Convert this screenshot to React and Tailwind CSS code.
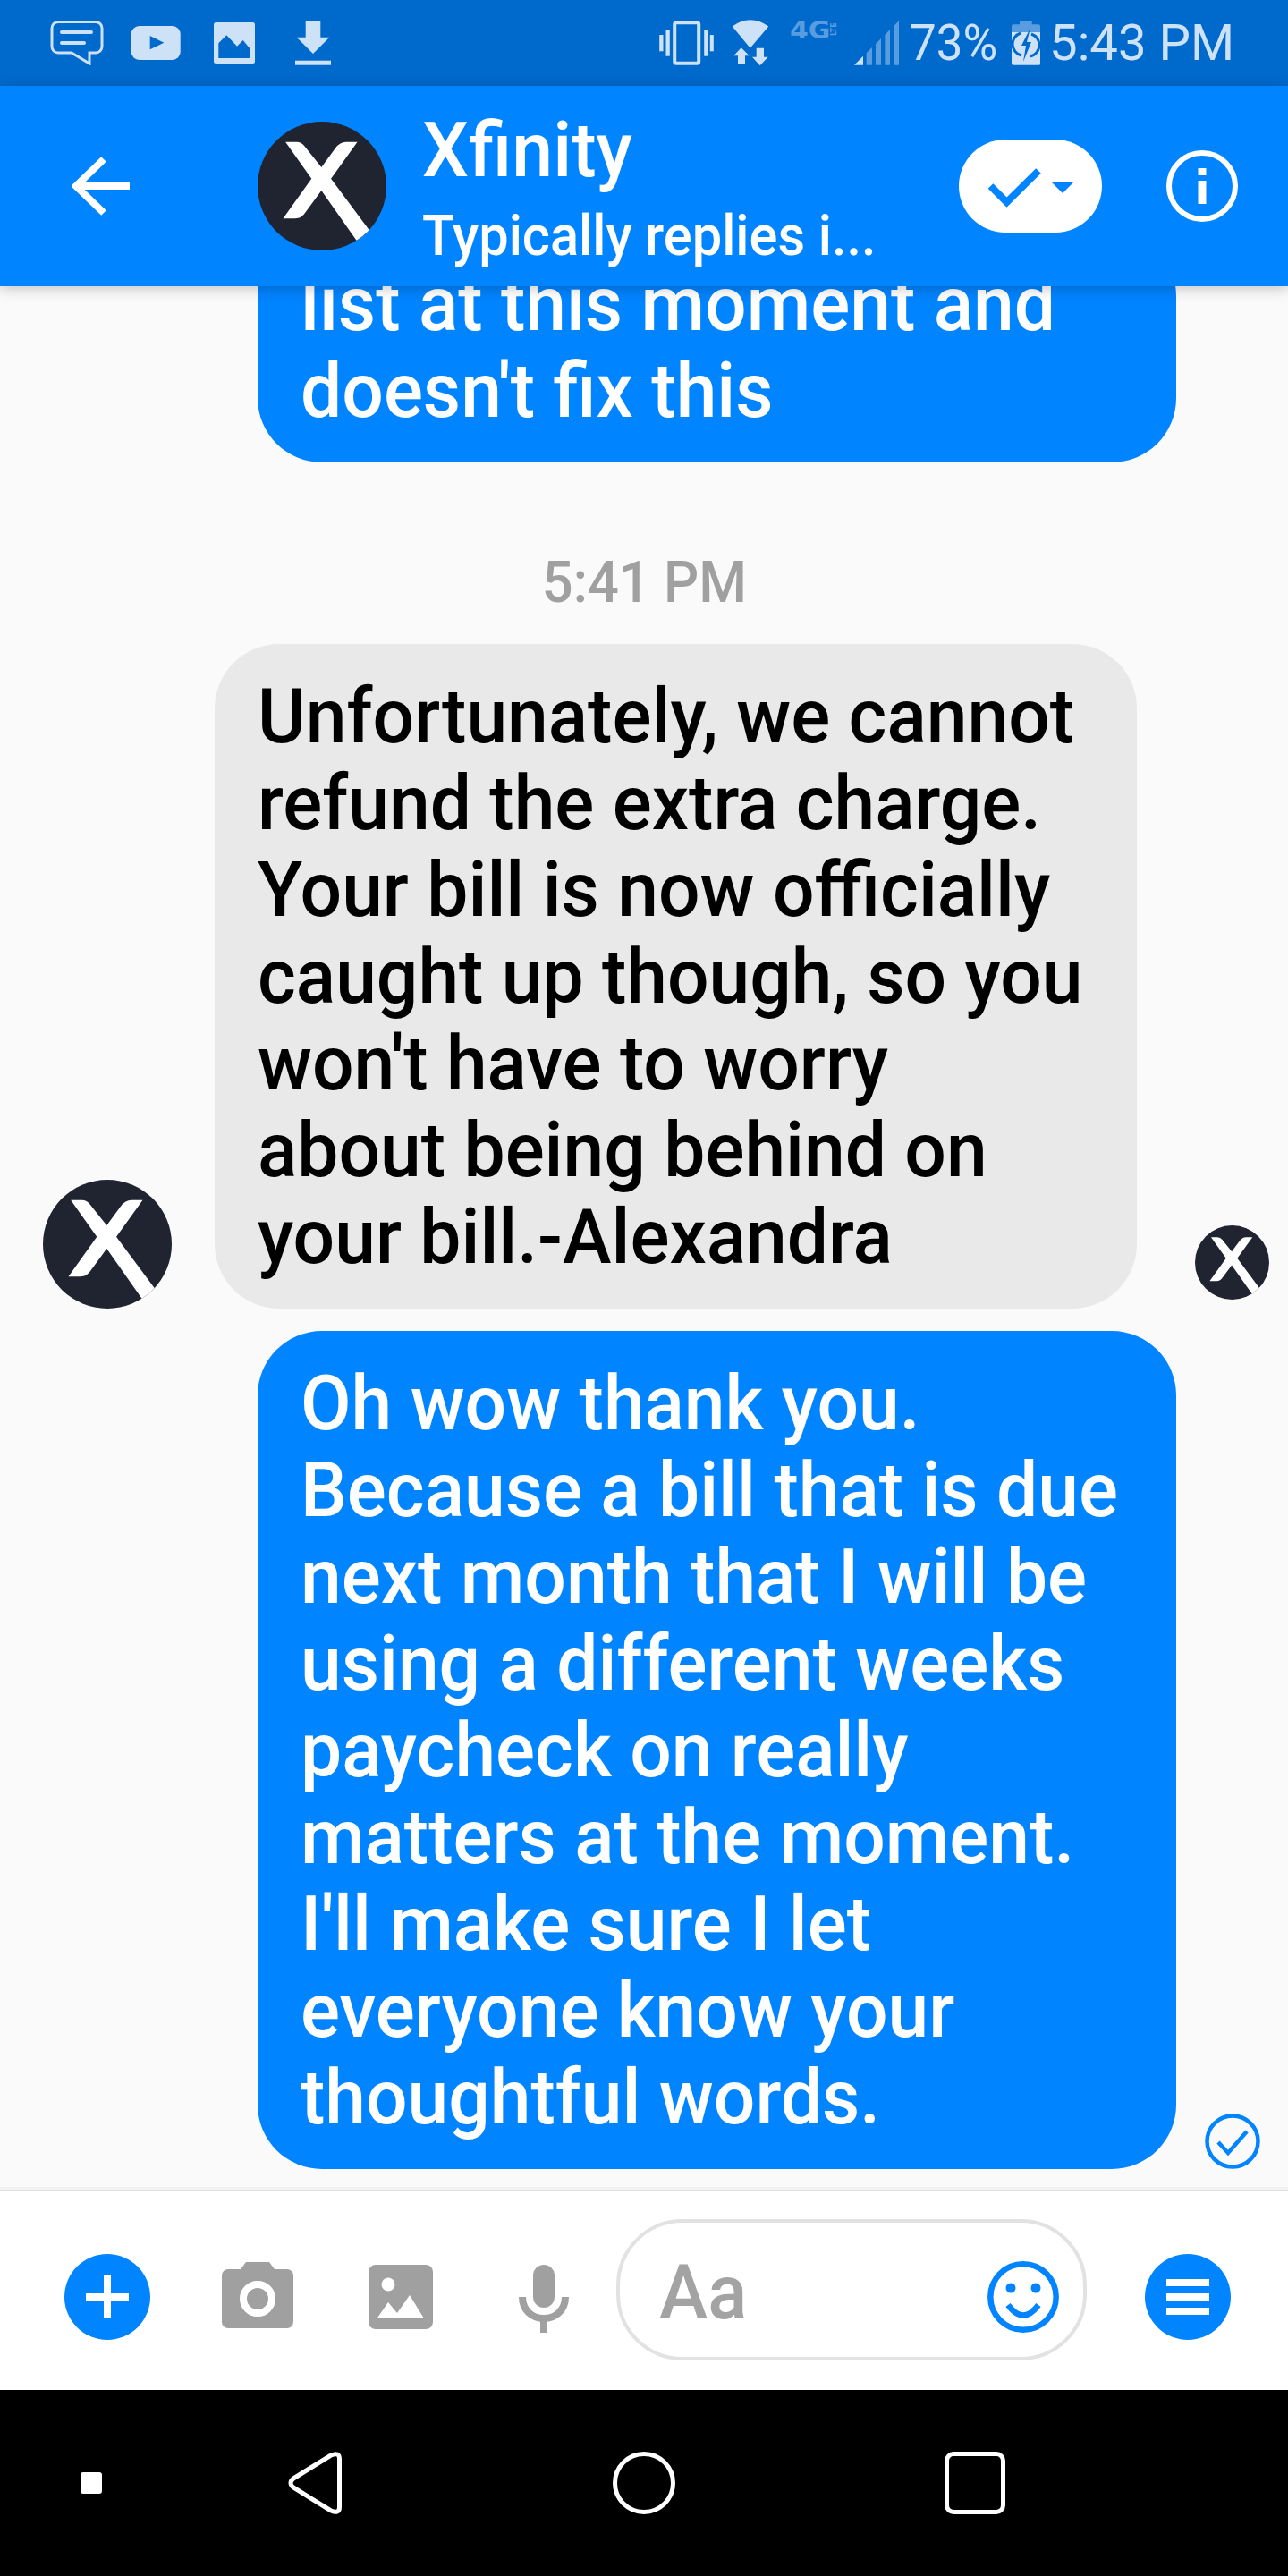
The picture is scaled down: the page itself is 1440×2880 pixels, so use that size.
import React from "react";

const XLogo = ({ className }) => (
  <svg viewBox="145 120 430 430" className={className}>
    <defs>
      <clipPath id="c"><circle cx="360" cy="335" r="215" /></clipPath>
    </defs>
    <circle cx="360" cy="335" r="215" fill="#1f2430" />
    <path clipPath="url(#c)" fill="#fff" d="M238 188H275Q292 188 302 202L358 272L405 208Q420 188 440 188H478L390 310L540 512L495 545L358 350L305 422Q292 443 270 443H230L325 310Z" />
  </svg>
);

const Bubble = ({ lines, className }) => (
  <div className={"shrink-0 rounded-[72px] text-[86px] leading-[97px] font-medium " + className}>
    {lines.map((l) => (
      <span key={l} className="block whitespace-nowrap origin-left scale-x-[.955]">{l}</span>
    ))}
  </div>
);

const StatusBar = () => (
  <div className="relative h-[96px] shrink-0 bg-[#0069cc] flex items-center text-[#cde1f7]">
    <svg width="60" height="50" viewBox="56 23 60 50" className="ml-[56px]" fill="none" stroke="#cde1f7" strokeWidth="3">
      <path d="M65 24.5H107a7 7 0 0 1 7 7V52a7 7 0 0 1-7 7H100V71L80 59H65a7 7 0 0 1-7-7V31.5a7 7 0 0 1 7-7Z" />
      <path strokeWidth="4" strokeLinecap="round" d="M69 36H102M69 48H94" />
    </svg>
    <svg width="56" height="40" viewBox="146 28 56 40" className="ml-[30px]">
      <rect x="146.7" y="29" width="55" height="38" rx="9" fill="#cde1f7" />
      <path d="M167.7 40L183.3 47.7L167.7 55.3Z" fill="#0069cc" />
    </svg>
    <svg width="46" height="46" viewBox="239 25 46 46" className="ml-[37px]">
      <rect x="239" y="25" width="46" height="46" rx="2.5" fill="#cde1f7" />
      <path d="M244.3 48.3L253.3 39.3L265 51.7L271.7 45L280 55V65H244.3Z" fill="#0069cc" />
    </svg>
    <svg width="40" height="50" viewBox="330 23 40 50" className="ml-[45px]" fill="#cde1f7">
      <path d="M341.7 23.3H358.3V41.7H368.3L350 60L331.7 41.7H341.7Z" />
      <rect x="330" y="67.7" width="40" height="5" />
    </svg>

    <svg width="61" height="50" viewBox="736.5 23 61 50" className="ml-[367px]" fill="#cde1f7">
      <rect x="753.7" y="25.3" width="27" height="45.4" rx="2" fill="none" stroke="#cde1f7" strokeWidth="4" />
      <rect x="744" y="33.3" width="4.3" height="29.4" />
      <rect x="786.7" y="33.3" width="4" height="29.4" />
      <rect x="736.7" y="39" width="4.3" height="18.3" />
      <rect x="793.3" y="39" width="4" height="18.3" />
    </svg>
    <svg width="42" height="52" viewBox="817 21.5 42 52" className="ml-[20px]" fill="#cde1f7">
      <path d="M817.7 29Q837.7 14.5 858.3 29L837.7 53.3Z" />
      <path d="M819.3 61.7L827.7 52.7L836.7 61.7H832V71H824V61.7Z" />
      <path d="M844.7 53.3H853V63.3H857.7L848.7 72.7L840 63.3H844.7Z" />
    </svg>
    <div className="ml-[23px] w-[54px] h-[50px] flex items-start text-[#5a9ce0] font-bold">
      <span className="w-[46px] text-[26px] leading-[22px] origin-left scale-x-[1.15] font-['DejaVu_Sans',sans-serif]">4G</span>
      <span className="text-[8px] leading-[8px] h-[20px] text-center [writing-mode:vertical-rl] rotate-180 font-['DejaVu_Sans',sans-serif]">LTE</span>
    </div>
    <svg width="50" height="50" viewBox="954 23 50 50" className="ml-[18px]">
      <path d="M954 72.7L964 62.7V72.7Z" fill="#cde1f7" />
      <path d="M967.7 59L974 53V72.7H967.7ZM978 49L984 43V72.7H978ZM988.3 39L994 33V72.7H988.3ZM998.3 29L1004 23.3V72.7H998.3Z" fill="#5a9ce0" />
    </svg>
    <span className="ml-[12px] w-[94px] text-[56px] leading-[50px] whitespace-nowrap origin-left scale-x-[.944] font-['Roboto',sans-serif]">73%</span>
    <svg width="32" height="50" viewBox="1130 23 32 50" className="ml-[20px]">
      <path d="M1139 23.3H1152.7V27.3H1160a2 2 0 0 1 2 2V36H1130V29.3a2 2 0 0 1 2-2H1139Z" fill="#5a9ce0" />
      <path d="M1130 36H1162.3V70.7a2 2 0 0 1-2 2H1132a2 2 0 0 1-2-2Z" fill="#cde1f7" />
      <path d="M1140 37A13 13 0 0 0 1141 62M1152 38A13 13 0 0 1 1151 63" fill="none" stroke="#0069cc" strokeWidth="3" />
      <path d="M1151 31L1141 51H1146L1143 69L1152 47H1147Z" fill="#0069cc" />
    </svg>
    <span className="ml-[10px] text-[56px] leading-[50px] whitespace-nowrap origin-left scale-x-[1.005] font-['Roboto',sans-serif]">5:43 PM</span>
  </div>
);

const Header = () => (
  <div className="relative z-10 h-[224px] shrink-0 bg-[#0084ff] flex items-center shadow-[0_3px_14px_rgba(0,0,0,0.22)] text-white">
    <svg width="66" height="66" viewBox="0 0 66 66" className="ml-[80px]" fill="none" stroke="#fff" strokeWidth="8">
      <path d="M4 33H65" />
      <path d="M36 3L5 33L36 63" />
    </svg>
    <XLogo className="ml-[142px] w-[144px] h-[144px]" />
    <div className="ml-[40px] mt-[16px] w-[521px] flex flex-col font-medium font-['Roboto',sans-serif]">
      <span className="block text-[85px] leading-[89px] whitespace-nowrap origin-left scale-x-[.97]">Xfinity</span>
      <span className="block text-[63px] leading-[89px] mt-[6px] whitespace-nowrap origin-left scale-x-[.945]">Typically replies i...</span>
    </div>
    <div className="ml-[79px] w-[160px] h-[104px] rounded-[52px] bg-white flex items-center justify-center">
      <svg width="160" height="104" viewBox="0 0 160 104" fill="none">
        <path d="M35.5 52L53.5 70L89 35" stroke="#0084ff" strokeWidth="8" />
        <path d="M104 48H128L116 60Z" fill="#0084ff" />
      </svg>
    </div>
    <svg width="80" height="80" viewBox="0 0 80 80" className="ml-[72px]">
      <circle cx="40" cy="40" r="37" fill="none" stroke="#fff" strokeWidth="6" />
      <rect x="35.5" y="20" width="9" height="8" fill="#fff" />
      <rect x="35.5" y="34" width="9" height="26" fill="#fff" />
    </svg>
  </div>
);

const Messages = () => (
  <div className="flex-1 min-h-0 overflow-hidden bg-[#fafafa] flex flex-col justify-end pb-[20px] font-['Roboto',sans-serif]">
    <Bubble
      className="ml-[288px] w-[1027px] px-[48px] py-[32px] bg-[#0084ff] text-white"
      lines={["list at this moment and", "doesn't fix this"]}
    />
    <div className="h-[203px] shrink-0 flex items-center justify-center pt-[66px]">
      <span className="text-[64px] leading-none font-medium text-[#a0a0a0] whitespace-nowrap scale-x-[.96]">5:41 PM</span>
    </div>
    <div className="flex items-end shrink-0">
      <XLogo className="ml-[48px] w-[144px] h-[144px]" />
      <Bubble
        className="ml-[48px] w-[1031px] px-[48px] py-[32px] bg-[#e9e9e9] text-black"
        lines={[
          "Unfortunately, we cannot",
          "refund the extra charge.",
          "Your bill is now officially",
          "caught up though, so you",
          "won't have to worry",
          "about being behind on",
          "your bill.-Alexandra",
        ]}
      />
      <XLogo className="ml-[65px] mb-[10px] w-[83px] h-[83px]" />
    </div>
    <div className="flex items-end shrink-0 mt-[25px]">
      <Bubble
        className="ml-[288px] w-[1027px] px-[48px] py-[32px] bg-[#0084ff] text-white"
        lines={[
          "Oh wow thank you.",
          "Because a bill that is due",
          "next month that I will be",
          "using a different weeks",
          "paycheck on really",
          "matters at the moment.",
          "I'll make sure I let",
          "everyone know your",
          "thoughtful words.",
        ]}
      />
      <svg width="62" height="62" viewBox="0 0 62 62" className="ml-[32px]" fill="none" stroke="#0084ff" strokeWidth="4.5">
        <circle cx="31" cy="31" r="28.5" />
        <path d="M15 32L26 44L47 20" />
      </svg>
    </div>
  </div>
);

const Composer = () => (
  <div className="shrink-0">
    <div className="h-[4px] bg-[#f2f2f2]" />
    <div className="h-px bg-[#e0e0e0]" />
    <div className="h-[222px] pt-[14px] bg-white flex items-center">
      <svg width="96" height="96" viewBox="0 0 96 96" className="ml-[72px]">
        <circle cx="48" cy="48" r="48" fill="#0084ff" />
        <path d="M24 48H72M48 24V72" stroke="#fff" strokeWidth="8" />
      </svg>
      <svg width="80" height="74" viewBox="0 0 80 74" className="ml-[80px] mb-[4px]">
        <path d="M27 0H53L59 8H73a7 7 0 0 1 7 7V67a7 7 0 0 1-7 7H7a7 7 0 0 1-7-7V15a7 7 0 0 1 7-7H21Z" fill="#a0a0a0" />
        <circle cx="40" cy="41" r="16" fill="none" stroke="#fff" strokeWidth="8" />
      </svg>
      <svg width="72" height="72" viewBox="0 0 72 72" className="ml-[84px]">
        <rect width="72" height="72" rx="8" fill="#a0a0a0" />
        <circle cx="22" cy="22" r="7.5" fill="#fff" />
        <path d="M9.5 60L22 42L32 54L46 34L62 60Z" fill="#fff" />
      </svg>
      <svg width="56" height="76" viewBox="0 0 56 76" className="ml-[96px] mt-[4px]" fill="none">
        <rect x="16" y="0" width="24" height="48" rx="12" fill="#a0a0a0" />
        <path d="M4 36C4 50 14 60 28 60S52 50 52 36" stroke="#a0a0a0" strokeWidth="8" />
        <path d="M28 60V76" stroke="#a0a0a0" strokeWidth="8" />
      </svg>
      <div className="ml-[53px] -mt-[16px] w-[526px] h-[158px] rounded-[74px] border-[4px] border-[#e2e2e2] flex items-center">
        <span className="ml-[44px] mt-[6px] text-[86px] font-medium leading-none text-[#a3a3a3] origin-left scale-x-[.95] font-['Roboto',sans-serif]">Aa</span>
        <svg width="80" height="80" viewBox="0 0 80 80" className="ml-auto mr-[27px] mt-[16px]" fill="none" stroke="#0084ff" strokeWidth="6.5">
          <circle cx="40" cy="40" r="36.7" />
          <circle cx="26" cy="30" r="5.5" fill="#0084ff" stroke="none" />
          <circle cx="54" cy="30" r="5.5" fill="#0084ff" stroke="none" />
          <path d="M23 49Q40 72 57 49" />
        </svg>
      </div>
      <svg width="96" height="96" viewBox="0 0 96 96" className="ml-[65px]">
        <circle cx="48" cy="48" r="48" fill="#0084ff" />
        <path d="M24 32H72M24 48H72M24 64H72" stroke="#fff" strokeWidth="8" />
      </svg>
    </div>
  </div>
);

const NavBar = () => (
  <div className="h-[208px] shrink-0 bg-black flex items-center">
    <div className="ml-[90px] w-[24px] h-[24px] rounded-[3px] bg-white" />
    <svg width="62" height="70" viewBox="0 0 62 70" className="ml-[206px]" fill="none" stroke="#fff" strokeWidth="5">
      <path d="M8 30L50 4Q59.5 0 59.5 8V62Q59.5 70 50 66L8 40Q2 35 8 30Z" />
    </svg>
    <div className="ml-[303px] w-[70px] h-[70px] rounded-full border-[5px] border-white" />
    <div className="ml-[301px] w-[68px] h-[70px] rounded-[10px] border-[5px] border-white" />
  </div>
);

export default function App() {
  return (
    <div className="w-[1440px] h-[2880px] flex flex-col overflow-hidden font-['Noto_Sans',sans-serif]">
      <StatusBar />
      <Header />
      <Messages />
      <Composer />
      <NavBar />
    </div>
  );
}
